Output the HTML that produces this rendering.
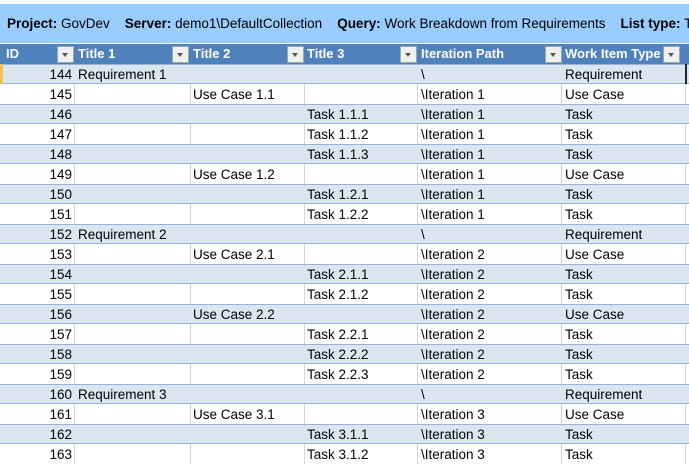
<!DOCTYPE html>
<html><head><style>
body{margin:0;width:689px;height:463px;overflow:hidden;background:#fff;font-family:"Liberation Sans",sans-serif;font-size:13px;color:#000;position:relative}
.top{position:absolute;left:0;top:0;width:689px;height:4px;background:#fff;border-bottom:1px solid #d4d4d4}
.info{position:absolute;left:0;top:4px;width:689px;height:39px;background:#99ccff;line-height:40px;white-space:nowrap;padding-left:7px;box-sizing:border-box;font-size:13.5px}
.info b{font-weight:bold}
.hdr{position:absolute;left:0;top:44px;width:689px;height:20px;background:#4f81bd;color:#fff;font-weight:bold;font-size:13px}
.c{position:absolute;top:0;height:20px;line-height:20px;white-space:nowrap;overflow:hidden}
.dd{position:absolute;top:2px;width:15px;height:15px;background:#f0f0f0;border:1px solid #9aa}
.dd:after{content:"";position:absolute;left:4px;top:6px;border-left:3.5px solid transparent;border-right:3.5px solid transparent;border-top:4px solid #555}
.r{position:absolute;left:0;width:689px;height:20px;font-size:13.5px}
.b{background:#dce6f1;border-top:1px solid #95b3d7;border-bottom:1px solid #95b3d7;box-sizing:border-box}
.w .v{position:absolute;top:0;width:1px;height:20px;background:#d4d4d4}
.r .c{top:1px}
.b .c{top:0}
</style></head><body>
<div class="top"></div>
<div class="info"><b>Project:</b> GovDev &nbsp;&nbsp; <b>Server:</b> demo1\DefaultCollection &nbsp;&nbsp; <b>Query:</b> Work Breakdown from Requirements &nbsp;&nbsp; <b>List type:</b> Tree</div>
<div class="hdr">
<div class="c" style="left:6px">ID</div><div class="dd" style="left:57px"></div>
<div class="c" style="left:78px">Title 1</div><div class="dd" style="left:172px"></div>
<div class="c" style="left:193px">Title 2</div><div class="dd" style="left:287px"></div>
<div class="c" style="left:307px">Title 3</div><div class="dd" style="left:400px"></div>
<div class="c" style="left:421px">Iteration Path</div><div class="dd" style="left:545px"></div>
<div class="c" style="left:565px;width:96px">Work Item Type</div><div class="dd" style="left:663px"></div>
</div>
<div id="rows"></div>
<script>
var d=[[144,"Requirement 1","","","\\","Requirement"],[145,"","Use Case 1.1","","\\Iteration 1","Use Case"],[146,"","","Task 1.1.1","\\Iteration 1","Task"],[147,"","","Task 1.1.2","\\Iteration 1","Task"],[148,"","","Task 1.1.3","\\Iteration 1","Task"],[149,"","Use Case 1.2","","\\Iteration 1","Use Case"],[150,"","","Task 1.2.1","\\Iteration 1","Task"],[151,"","","Task 1.2.2","\\Iteration 1","Task"],[152,"Requirement 2","","","\\","Requirement"],[153,"","Use Case 2.1","","\\Iteration 2","Use Case"],[154,"","","Task 2.1.1","\\Iteration 2","Task"],[155,"","","Task 2.1.2","\\Iteration 2","Task"],[156,"","Use Case 2.2","","\\Iteration 2","Use Case"],[157,"","","Task 2.2.1","\\Iteration 2","Task"],[158,"","","Task 2.2.2","\\Iteration 2","Task"],[159,"","","Task 2.2.3","\\Iteration 2","Task"],[160,"Requirement 3","","","\\","Requirement"],[161,"","Use Case 3.1","","\\Iteration 3","Use Case"],[162,"","","Task 3.1.1","\\Iteration 3","Task"],[163,"","","Task 3.1.2","\\Iteration 3","Task"]];
var xs=[78,193,307,421,565],vs=[74,190,304,417,561,685],h="";
d.forEach(function(r,i){var b=i%2==0;h+='<div class="r '+(b?'b':'w')+'" style="top:'+(64+i*20)+'px">';
if(!b)vs.forEach(function(x){h+='<div class="v" style="left:'+x+'px"></div>'});
h+='<div class="c" style="left:4px;width:68px;text-align:right">'+r[0]+'</div>';
for(var k=1;k<6;k++)if(r[k])h+='<div class="c" style="left:'+xs[k-1]+'px">'+r[k]+'</div>';
h+='</div>';});
document.getElementById("rows").innerHTML=h+'<div style="position:absolute;left:0;top:64px;width:3px;height:20px;background:#f2c14e"></div><div style="position:absolute;left:685px;top:64px;width:2px;height:20px;background:#222"></div>';
</script>
</body></html>
